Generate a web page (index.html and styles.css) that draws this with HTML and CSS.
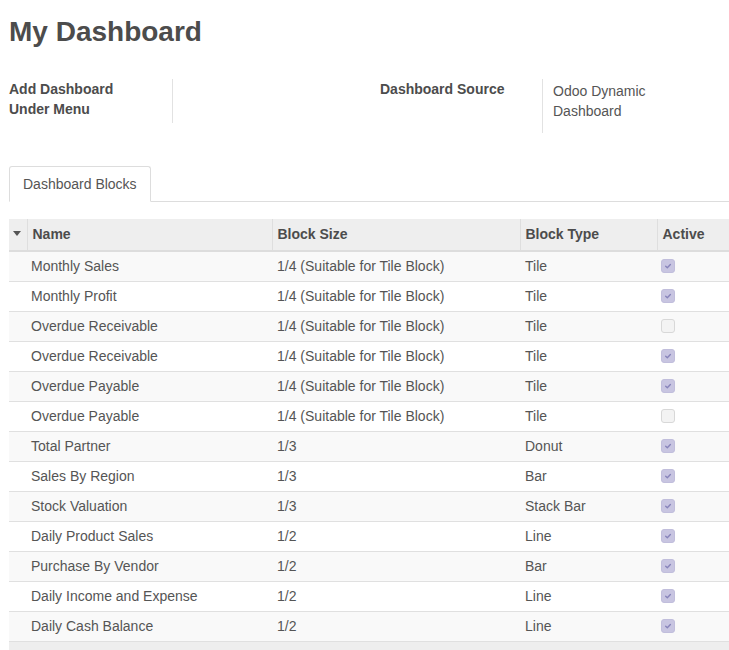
FILE: index.html
```html
<!DOCTYPE html>
<html>
<head>
<meta charset="utf-8">
<link rel="stylesheet" href="styles.css">
</head>
<body>
<div class="sheet">
  <h1 class="title">My Dashboard</h1>
  <div class="fields">
    <div class="label">Add Dashboard<br>Under Menu</div>
    <div class="value value-empty"></div>
    <div class="label label-right">Dashboard Source</div>
    <div class="value">Odoo Dynamic<br>Dashboard</div>
  </div>
  <div class="tabs">
    <div class="tab active">Dashboard Blocks</div>
  </div>
  <table class="list">
    <colgroup>
      <col class="c-caret"><col class="c-name"><col class="c-size"><col class="c-type"><col class="c-active">
    </colgroup>
    <thead>
      <tr>
        <th class="caret-cell"><span class="caret"></span></th>
        <th>Name</th>
        <th>Block Size</th>
        <th>Block Type</th>
        <th>Active</th>
      </tr>
    </thead>
    <tbody>
      <tr><td></td><td>Monthly Sales</td><td>1/4 (Suitable for Tile Block)</td><td>Tile</td><td><span class="cb on"><svg viewBox="0 0 14 14"><path d="M4.3 7.2 L6.2 9 L9.8 5.2"/></svg></span></td></tr>
      <tr><td></td><td>Monthly Profit</td><td>1/4 (Suitable for Tile Block)</td><td>Tile</td><td><span class="cb on"><svg viewBox="0 0 14 14"><path d="M4.3 7.2 L6.2 9 L9.8 5.2"/></svg></span></td></tr>
      <tr><td></td><td>Overdue Receivable</td><td>1/4 (Suitable for Tile Block)</td><td>Tile</td><td><span class="cb off"></span></td></tr>
      <tr><td></td><td>Overdue Receivable</td><td>1/4 (Suitable for Tile Block)</td><td>Tile</td><td><span class="cb on"><svg viewBox="0 0 14 14"><path d="M4.3 7.2 L6.2 9 L9.8 5.2"/></svg></span></td></tr>
      <tr><td></td><td>Overdue Payable</td><td>1/4 (Suitable for Tile Block)</td><td>Tile</td><td><span class="cb on"><svg viewBox="0 0 14 14"><path d="M4.3 7.2 L6.2 9 L9.8 5.2"/></svg></span></td></tr>
      <tr><td></td><td>Overdue Payable</td><td>1/4 (Suitable for Tile Block)</td><td>Tile</td><td><span class="cb off"></span></td></tr>
      <tr><td></td><td>Total Partner</td><td>1/3</td><td>Donut</td><td><span class="cb on"><svg viewBox="0 0 14 14"><path d="M4.3 7.2 L6.2 9 L9.8 5.2"/></svg></span></td></tr>
      <tr><td></td><td>Sales By Region</td><td>1/3</td><td>Bar</td><td><span class="cb on"><svg viewBox="0 0 14 14"><path d="M4.3 7.2 L6.2 9 L9.8 5.2"/></svg></span></td></tr>
      <tr><td></td><td>Stock Valuation</td><td>1/3</td><td>Stack Bar</td><td><span class="cb on"><svg viewBox="0 0 14 14"><path d="M4.3 7.2 L6.2 9 L9.8 5.2"/></svg></span></td></tr>
      <tr><td></td><td>Daily Product Sales</td><td>1/2</td><td>Line</td><td><span class="cb on"><svg viewBox="0 0 14 14"><path d="M4.3 7.2 L6.2 9 L9.8 5.2"/></svg></span></td></tr>
      <tr><td></td><td>Purchase By Vendor</td><td>1/2</td><td>Bar</td><td><span class="cb on"><svg viewBox="0 0 14 14"><path d="M4.3 7.2 L6.2 9 L9.8 5.2"/></svg></span></td></tr>
      <tr><td></td><td>Daily Income and Expense</td><td>1/2</td><td>Line</td><td><span class="cb on"><svg viewBox="0 0 14 14"><path d="M4.3 7.2 L6.2 9 L9.8 5.2"/></svg></span></td></tr>
      <tr><td></td><td>Daily Cash Balance</td><td>1/2</td><td>Line</td><td><span class="cb on"><svg viewBox="0 0 14 14"><path d="M4.3 7.2 L6.2 9 L9.8 5.2"/></svg></span></td></tr>
    </tbody>
    <tfoot>
      <tr><td colspan="5"></td></tr>
    </tfoot>
  </table>
</div>
</body>
</html>
```
FILE: styles.css
```css
html, body {
  margin: 0;
  padding: 0;
  background: #ffffff;
}
body {
  font-family: "Liberation Sans", Arial, sans-serif;
  font-size: 14px;
  line-height: 20px;
  color: #4c4c4c;
}
.sheet {
  padding: 16px 0 0 9px;
}
.title {
  margin: 0;
  font-size: 28px;
  line-height: 32px;
  font-weight: bold;
  color: #4c4c4c;
}
.fields {
  margin-top: 31px;
  display: grid;
  grid-template-columns: 163px 208px 162px auto;
  align-items: start;
}
.label {
  font-weight: bold;
  color: #4c4c4c;
}
.label-right {
  padding-left: 0;
}
.value {
  border-left: 1px solid #e2e2e2;
  padding: 2px 0 12px 10px;
  color: #555555;
}
.value-empty {
  height: 44px;
  padding: 0;
  box-sizing: border-box;
}
.tabs {
  margin-top: 33px;
  display: flex;
  border-bottom: 1px solid #dddddd;
}
.tab {
  border: 1px solid #dddddd;
  border-bottom-color: #ffffff;
  border-radius: 3px 3px 0 0;
  padding: 7px 13px;
  margin-bottom: -1px;
  background: #ffffff;
  color: #555555;
}
.list {
  margin-top: 17px;
  width: 720px;
  border-collapse: collapse;
  table-layout: fixed;
}
.c-caret { width: 18px; }
.c-name { width: 245px; }
.c-size { width: 248px; }
.c-type { width: 137px; }
.c-active { width: 72px; }
.list th {
  background: #eeeeee;
  height: 32px;
  padding: 0 0 2px 5px;
  box-sizing: border-box;
  text-align: left;
  font-weight: bold;
  color: #4c4c4c;
  border-left: 1px solid #dedede;
  border-bottom: 2px solid #dddddd;
  vertical-align: middle;
}
.list th.caret-cell {
  border-left: none;
  padding: 0 0 2px 4px;
}
.caret {
  display: block;
  width: 0;
  height: 0;
  border-left: 4px solid transparent;
  border-right: 4px solid transparent;
  border-top: 5px solid #555555;
}
.list td {
  height: 28px;
  padding: 0 0 1px 4px;
  border-bottom: 1px solid #e0e0e0;
  vertical-align: middle;
  color: #555555;
  white-space: nowrap;
}
.list tbody tr:nth-child(odd) td {
  background: #f9f9f9;
}
.list tbody td:nth-child(3),
.list tbody td:nth-child(4) {
  padding-left: 5px;
}
.list tbody td:nth-child(5) {
  padding-left: 4px;
}
.cb {
  display: block;
  width: 14px;
  height: 14px;
  box-sizing: border-box;
  border-radius: 3px;
}
.cb.on {
  background: #c8c5e1;
  border: 1px solid #c1bedc;
}
.cb.on svg {
  display: block;
  width: 12px;
  height: 12px;
}
.cb.on path {
  fill: none;
  stroke: #8884bb;
  stroke-width: 1.6;
  stroke-linecap: round;
  stroke-linejoin: round;
}
.cb.off {
  background: #f3f3f3;
  border: 1px solid #d8d8d8;
}
.list tfoot td {
  height: 12px;
  background: #eeeeee;
  border-bottom: none;
  padding: 0;
}
```
